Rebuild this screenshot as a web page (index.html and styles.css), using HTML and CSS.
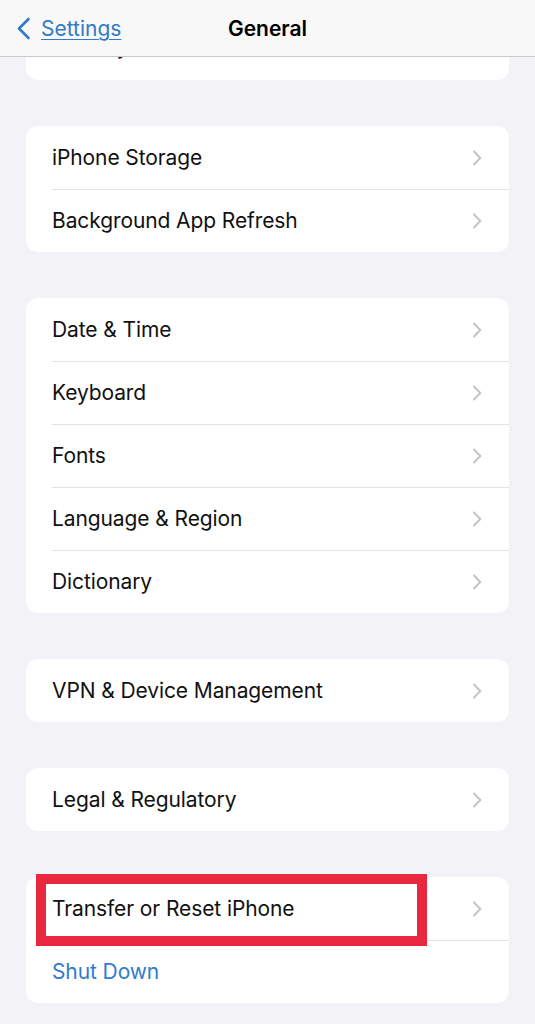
FILE: index.html
```html
<!DOCTYPE html>
<html lang="en">
<head>
<meta charset="utf-8">
<title>General</title>
<link rel="stylesheet" href="styles.css">
</head>
<body>
<div class="screen">
  <header class="nav">
    <a class="back" href="#">
      <svg class="back-chev" width="15" height="23" viewBox="0 0 15 23"><path d="M12.5 2 L3 11.5 L12.5 21" fill="none" stroke="#3478c8" stroke-width="2.6" stroke-linecap="round" stroke-linejoin="round"/></svg>
      <span class="back-text">Settings</span>
    </a>
    <h1 class="title">General</h1>
    <span></span>
  </header>
  <main class="content">
    <section class="card card-first">
      <div class="row"><span class="label peek">CarPlay</span><svg class="chev" width="10" height="16" viewBox="0 0 10 16"><path d="M2 1.5 L8.3 8 L2 14.5" fill="none" stroke="#c4c4c7" stroke-width="2" stroke-linecap="round" stroke-linejoin="round"/></svg></div>
    </section>
    <section class="card">
      <div class="row"><span class="label">iPhone Storage</span><svg class="chev" width="10" height="16" viewBox="0 0 10 16"><path d="M2 1.5 L8.3 8 L2 14.5" fill="none" stroke="#c4c4c7" stroke-width="2" stroke-linecap="round" stroke-linejoin="round"/></svg></div>
      <div class="row"><span class="label">Background App Refresh</span><svg class="chev" width="10" height="16" viewBox="0 0 10 16"><path d="M2 1.5 L8.3 8 L2 14.5" fill="none" stroke="#c4c4c7" stroke-width="2" stroke-linecap="round" stroke-linejoin="round"/></svg></div>
    </section>
    <section class="card">
      <div class="row"><span class="label">Date &amp; Time</span><svg class="chev" width="10" height="16" viewBox="0 0 10 16"><path d="M2 1.5 L8.3 8 L2 14.5" fill="none" stroke="#c4c4c7" stroke-width="2" stroke-linecap="round" stroke-linejoin="round"/></svg></div>
      <div class="row"><span class="label">Keyboard</span><svg class="chev" width="10" height="16" viewBox="0 0 10 16"><path d="M2 1.5 L8.3 8 L2 14.5" fill="none" stroke="#c4c4c7" stroke-width="2" stroke-linecap="round" stroke-linejoin="round"/></svg></div>
      <div class="row"><span class="label">Fonts</span><svg class="chev" width="10" height="16" viewBox="0 0 10 16"><path d="M2 1.5 L8.3 8 L2 14.5" fill="none" stroke="#c4c4c7" stroke-width="2" stroke-linecap="round" stroke-linejoin="round"/></svg></div>
      <div class="row"><span class="label">Language &amp; Region</span><svg class="chev" width="10" height="16" viewBox="0 0 10 16"><path d="M2 1.5 L8.3 8 L2 14.5" fill="none" stroke="#c4c4c7" stroke-width="2" stroke-linecap="round" stroke-linejoin="round"/></svg></div>
      <div class="row"><span class="label">Dictionary</span><svg class="chev" width="10" height="16" viewBox="0 0 10 16"><path d="M2 1.5 L8.3 8 L2 14.5" fill="none" stroke="#c4c4c7" stroke-width="2" stroke-linecap="round" stroke-linejoin="round"/></svg></div>
    </section>
    <section class="card">
      <div class="row"><span class="label">VPN &amp; Device Management</span><svg class="chev" width="10" height="16" viewBox="0 0 10 16"><path d="M2 1.5 L8.3 8 L2 14.5" fill="none" stroke="#c4c4c7" stroke-width="2" stroke-linecap="round" stroke-linejoin="round"/></svg></div>
    </section>
    <section class="card">
      <div class="row"><span class="label">Legal &amp; Regulatory</span><svg class="chev" width="10" height="16" viewBox="0 0 10 16"><path d="M2 1.5 L8.3 8 L2 14.5" fill="none" stroke="#c4c4c7" stroke-width="2" stroke-linecap="round" stroke-linejoin="round"/></svg></div>
    </section>
    <section class="card card-last">
      <div class="row"><span class="label">Transfer or Reset iPhone</span><svg class="chev" width="10" height="16" viewBox="0 0 10 16"><path d="M2 1.5 L8.3 8 L2 14.5" fill="none" stroke="#c4c4c7" stroke-width="2" stroke-linecap="round" stroke-linejoin="round"/></svg></div>
      <div class="row"><span class="label link">Shut Down</span></div>
      <div class="highlight"></div>
    </section>
  </main>
</div>
</body>
</html>
```

FILE: styles.css
```css
html, body {
  margin: 0;
  padding: 0;
}
body {
  background: #f2f2f7;
  font-family: Inter, "Noto Sans", "Liberation Sans", sans-serif;
  color: #111;
}
.screen {
  width: 535px;
  height: 1024px;
  overflow: hidden;
  background: #f2f2f7;
}
.nav {
  position: relative;
  z-index: 2;
  height: 57px;
  box-sizing: border-box;
  border-bottom: 1px solid #c9c9cc;
  background: #f8f8f8;
  display: grid;
  grid-template-columns: 1fr auto 1fr;
  align-items: center;
}
.back {
  display: flex;
  align-items: center;
  gap: 10px;
  padding-left: 16px;
  text-decoration: none;
  color: #3478c8;
}
.back-chev {
  display: block;
}
.back-text {
  font-size: 21px;
  text-decoration: underline;
  text-underline-offset: 3px;
  text-decoration-thickness: 1px;
}
.title {
  margin: 0;
  font-size: 21px;
  font-weight: 600;
  color: #000;
}
.content {
  padding: 0 26px;
}
.card {
  position: relative;
  background: #fff;
  border-radius: 12px;
  margin-top: 46px;
}
.card-first {
  margin-top: -40px;
}
.row {
  display: flex;
  align-items: center;
  justify-content: space-between;
  height: 63px;
  margin-left: 26px;
  padding-right: 27px;
}
.row + .row {
  box-shadow: inset 0 1px 0 #e2e2e5;
}
.label {
  font-size: 21px;
  letter-spacing: -0.1px;
  color: #111;
}
.label.peek {
  position: relative;
  top: -2px;
}
.label.link {
  color: #2f7bd0;
}
.chev {
  display: block;
  flex: none;
}
.highlight {
  position: absolute;
  left: 10px;
  top: -3px;
  width: 391px;
  height: 72px;
  box-sizing: border-box;
  border: 10px solid #e8283f;
  pointer-events: none;
}
```
